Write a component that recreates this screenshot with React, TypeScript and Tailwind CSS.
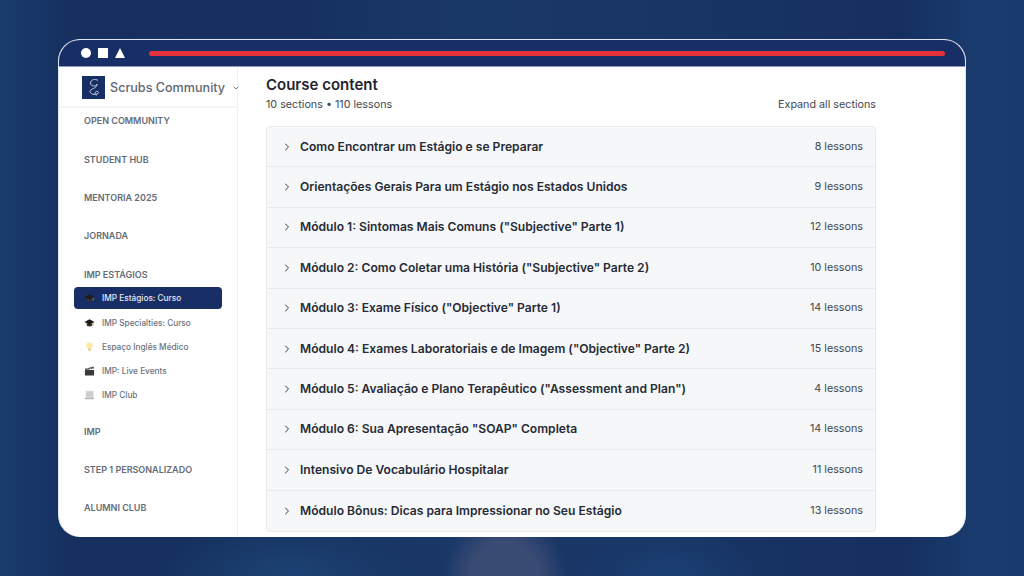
import { ChevronDown, ChevronRight } from "lucide-react";

const sections = [
  { title: "Como Encontrar um Estágio e se Preparar", lessons: 8 },
  { title: "Orientações Gerais Para um Estágio nos Estados Unidos", lessons: 9 },
  { title: 'Módulo 1: Sintomas Mais Comuns ("Subjective" Parte 1)', lessons: 12 },
  { title: 'Módulo 2: Como Coletar uma História ("Subjective" Parte 2)', lessons: 10 },
  { title: 'Módulo 3: Exame Físico ("Objective" Parte 1)', lessons: 14 },
  { title: 'Módulo 4: Exames Laboratoriais e de Imagem ("Objective" Parte 2)', lessons: 15 },
  { title: 'Módulo 5: Avaliação e Plano Terapêutico ("Assessment and Plan")', lessons: 4 },
  { title: 'Módulo 6: Sua Apresentação "SOAP" Completa', lessons: 14 },
  { title: "Intensivo De Vocabulário Hospitalar", lessons: 11 },
  { title: "Módulo Bônus: Dicas para Impressionar no Seu Estágio", lessons: 13 },
];

function CapIcon() {
  return (
    <svg width="12" height="12" viewBox="0 0 12 12">
      <path d="M3 6.5 L3 9 Q6 10.8 9 9 L9 6.5 Z" fill="#3b3128" />
      <path d="M0.5 5 L6 2 L11.5 5 L6 8 Z" fill="#1f1b18" />
      <path d="M10 5.6 L10 8.6" stroke="#c99a2e" strokeWidth="0.8" />
    </svg>
  );
}

function BulbIcon() {
  return (
    <svg width="12" height="12" viewBox="0 0 12 12">
      <circle cx="6" cy="4.5" r="3.4" fill="#fde9a0" />
      <rect x="4.6" y="7.6" width="2.8" height="2.6" rx="0.6" fill="#d9c98c" />
    </svg>
  );
}

function ClapperIcon() {
  return (
    <svg width="12" height="12" viewBox="0 0 12 12">
      <rect x="1" y="5" width="10" height="6" rx="0.6" fill="#3a3a3c" />
      <path d="M1 3.6 L10.4 1 L11 3 L1.4 5.4 Z" fill="#55555a" />
      <path d="M3.4 3 L4.2 4.6 M6.2 2.3 L7 3.9" stroke="#e5e5e5" strokeWidth="0.7" />
    </svg>
  );
}

function ScrollIcon() {
  return (
    <svg width="12" height="12" viewBox="0 0 12 12">
      <rect x="2" y="1.5" width="8.5" height="7.5" fill="#d4d4d2" />
      <rect x="1" y="9" width="10" height="1.6" fill="#b4b4b2" />
      <path d="M3.4 3.4 H9 M3.4 5 H9 M3.4 6.6 H9" stroke="#bdbdbb" strokeWidth="0.5" />
    </svg>
  );
}

function SectionLabel({ children }: { children: string }) {
  return (
    <div className="flex h-[38.3px] items-center pl-[25px] text-[9px] font-semibold whitespace-nowrap uppercase text-[#656b76]">
      {children}
    </div>
  );
}

function SubItem({ icon, label, active }: { icon: React.ReactNode; label: string; active?: boolean }) {
  return (
    <div
      className={
        active
          ? "ml-[15px] mr-[15px] flex h-[22px] items-center gap-[7px] rounded-[4px] bg-[#172f66] pl-[10px] text-[8.25px] font-medium text-[#e5e9f2]"
          : "ml-[15px] mr-[15px] mt-[2px] flex h-[22px] items-center gap-[7px] pl-[10px] text-[8.25px] font-medium text-[#6b7280] first-of-type:mt-0"
      }
    >
      <span className="flex w-[11px] items-center justify-center">{icon}</span>
      {label}
    </div>
  );
}

export default function App() {
  return (
    <div
      className="h-[576px] w-[1024px] overflow-hidden bg-[radial-gradient(62px_70px_at_505px_580px,#3a4b74_55%,transparent),radial-gradient(130px_60px_at_290px_576px,#1c4374,transparent),radial-gradient(90px_50px_at_670px_576px,#1b3f72,transparent),linear-gradient(90deg,#1a3c6e_0%,#15305f_7%,#16315f_30%,#1a3868_45%,#183566_65%,#152f60_88%,#1a3b6e_95%,#193a6c_100%)] pl-[58px] pt-[39px] text-[#1f2430]"
      style={{ fontFamily: "Inter, 'Liberation Sans', sans-serif" }}
    >
      <div className="flex h-[498px] w-[908px] flex-col overflow-hidden rounded-[22px] border-[1.5px] border-b-0 border-[#dfe4ee] bg-white">
        <div className="flex h-[27px] shrink-0 items-center gap-[7px] border-b border-[#8f9dbb] bg-[#172f66] pl-[22px] pr-[20px]">
          <span className="size-[10px] rounded-full bg-white" />
          <span className="size-[10px] bg-white" />
          <svg width="10" height="10" viewBox="0 0 10 10">
            <path d="M5 0 L10 10 L0 10 Z" fill="white" />
          </svg>
          <div className="ml-[17px] h-[5px] flex-1 rounded-full bg-[#e5323a]" />
        </div>

        <div className="flex min-h-0 flex-1">
          <aside className="flex w-[179px] shrink-0 flex-col border-r border-[#f0f1f4]">
            <div className="flex h-[41px] shrink-0 items-center border-b-2 border-[#f3f4f6] pl-[23px] pt-[2px]">
              <div className="flex size-[23px] shrink-0 items-center justify-center bg-[#172f66]">
                <svg width="14" height="19" viewBox="0 0 14 19" fill="none" stroke="#d5dbe8" strokeWidth="0.9">
                  <path d="M11 2.5 C8.5 0.5 3.5 1.5 3.5 5 C3.5 8.5 9 9 10 6 C10 11 3 10.5 3 13.5 C3 16 8 17.5 11 15.5 C12.5 14 10 12.5 8.5 14 C7.5 15 8 17 10 17" />
                </svg>
              </div>
              <span className="ml-[5px] mt-[1px] whitespace-nowrap text-[12.6px] font-medium text-[#5f6672]">Scrubs Community</span>
              <ChevronDown className="ml-[7px] mt-[1px] size-[8px] shrink-0 text-[#5f6672]" strokeWidth={2.5} />
            </div>
            <div className="-mt-[6px]">
              <SectionLabel>Open Community</SectionLabel>
              <SectionLabel>Student Hub</SectionLabel>
              <SectionLabel>Mentoria 2025</SectionLabel>
              <SectionLabel>Jornada</SectionLabel>
              <SectionLabel>IMP Estágios</SectionLabel>
            </div>
            <div className="-mt-[6px] flex flex-col">
              <SubItem active icon={<CapIcon />} label="IMP Estágios: Curso" />
              <div className="mt-[3px]">
                <SubItem icon={<CapIcon />} label="IMP Specialties: Curso" />
                <SubItem icon={<BulbIcon />} label="Espaço Inglês Médico" />
                <SubItem icon={<ClapperIcon />} label="IMP: Live Events" />
                <SubItem icon={<ScrollIcon />} label="IMP Club" />
              </div>
            </div>
            <div className="mt-[6px]">
              <SectionLabel>IMP</SectionLabel>
              <SectionLabel>Step 1 Personalizado</SectionLabel>
              <SectionLabel>Alumni Club</SectionLabel>
            </div>
          </aside>

          <main className="w-[638px] pl-[28px]">
            <h1 className="mt-[8px] text-[15px] leading-[19px] font-semibold text-[#1f2430]">Course content</h1>
            <div className="mt-[4px] flex items-center justify-between text-[10.75px] leading-[14px] text-[#404854]">
              <span>10 sections • 110 lessons</span>
              <span>Expand all sections</span>
            </div>
            <div className="mt-[14px] overflow-hidden rounded border border-[#e8eaee] bg-[#f6f7f9]">
              {sections.map((section) => (
                <div
                  key={section.title}
                  className="flex h-[40.4px] items-center border-b border-[#e8eaee] pl-[14px] pr-[12px] last:border-b-0"
                >
                  <ChevronRight className="size-[12px] text-[#333a46]" strokeWidth={2} />
                  <span className="ml-[7px] text-[12.1px] font-semibold text-[#262b36]">{section.title}</span>
                  <span className="ml-auto text-[10.75px] text-[#404854]">{section.lessons} lessons</span>
                </div>
              ))}
            </div>
          </main>
        </div>
      </div>
    </div>
  );
}
